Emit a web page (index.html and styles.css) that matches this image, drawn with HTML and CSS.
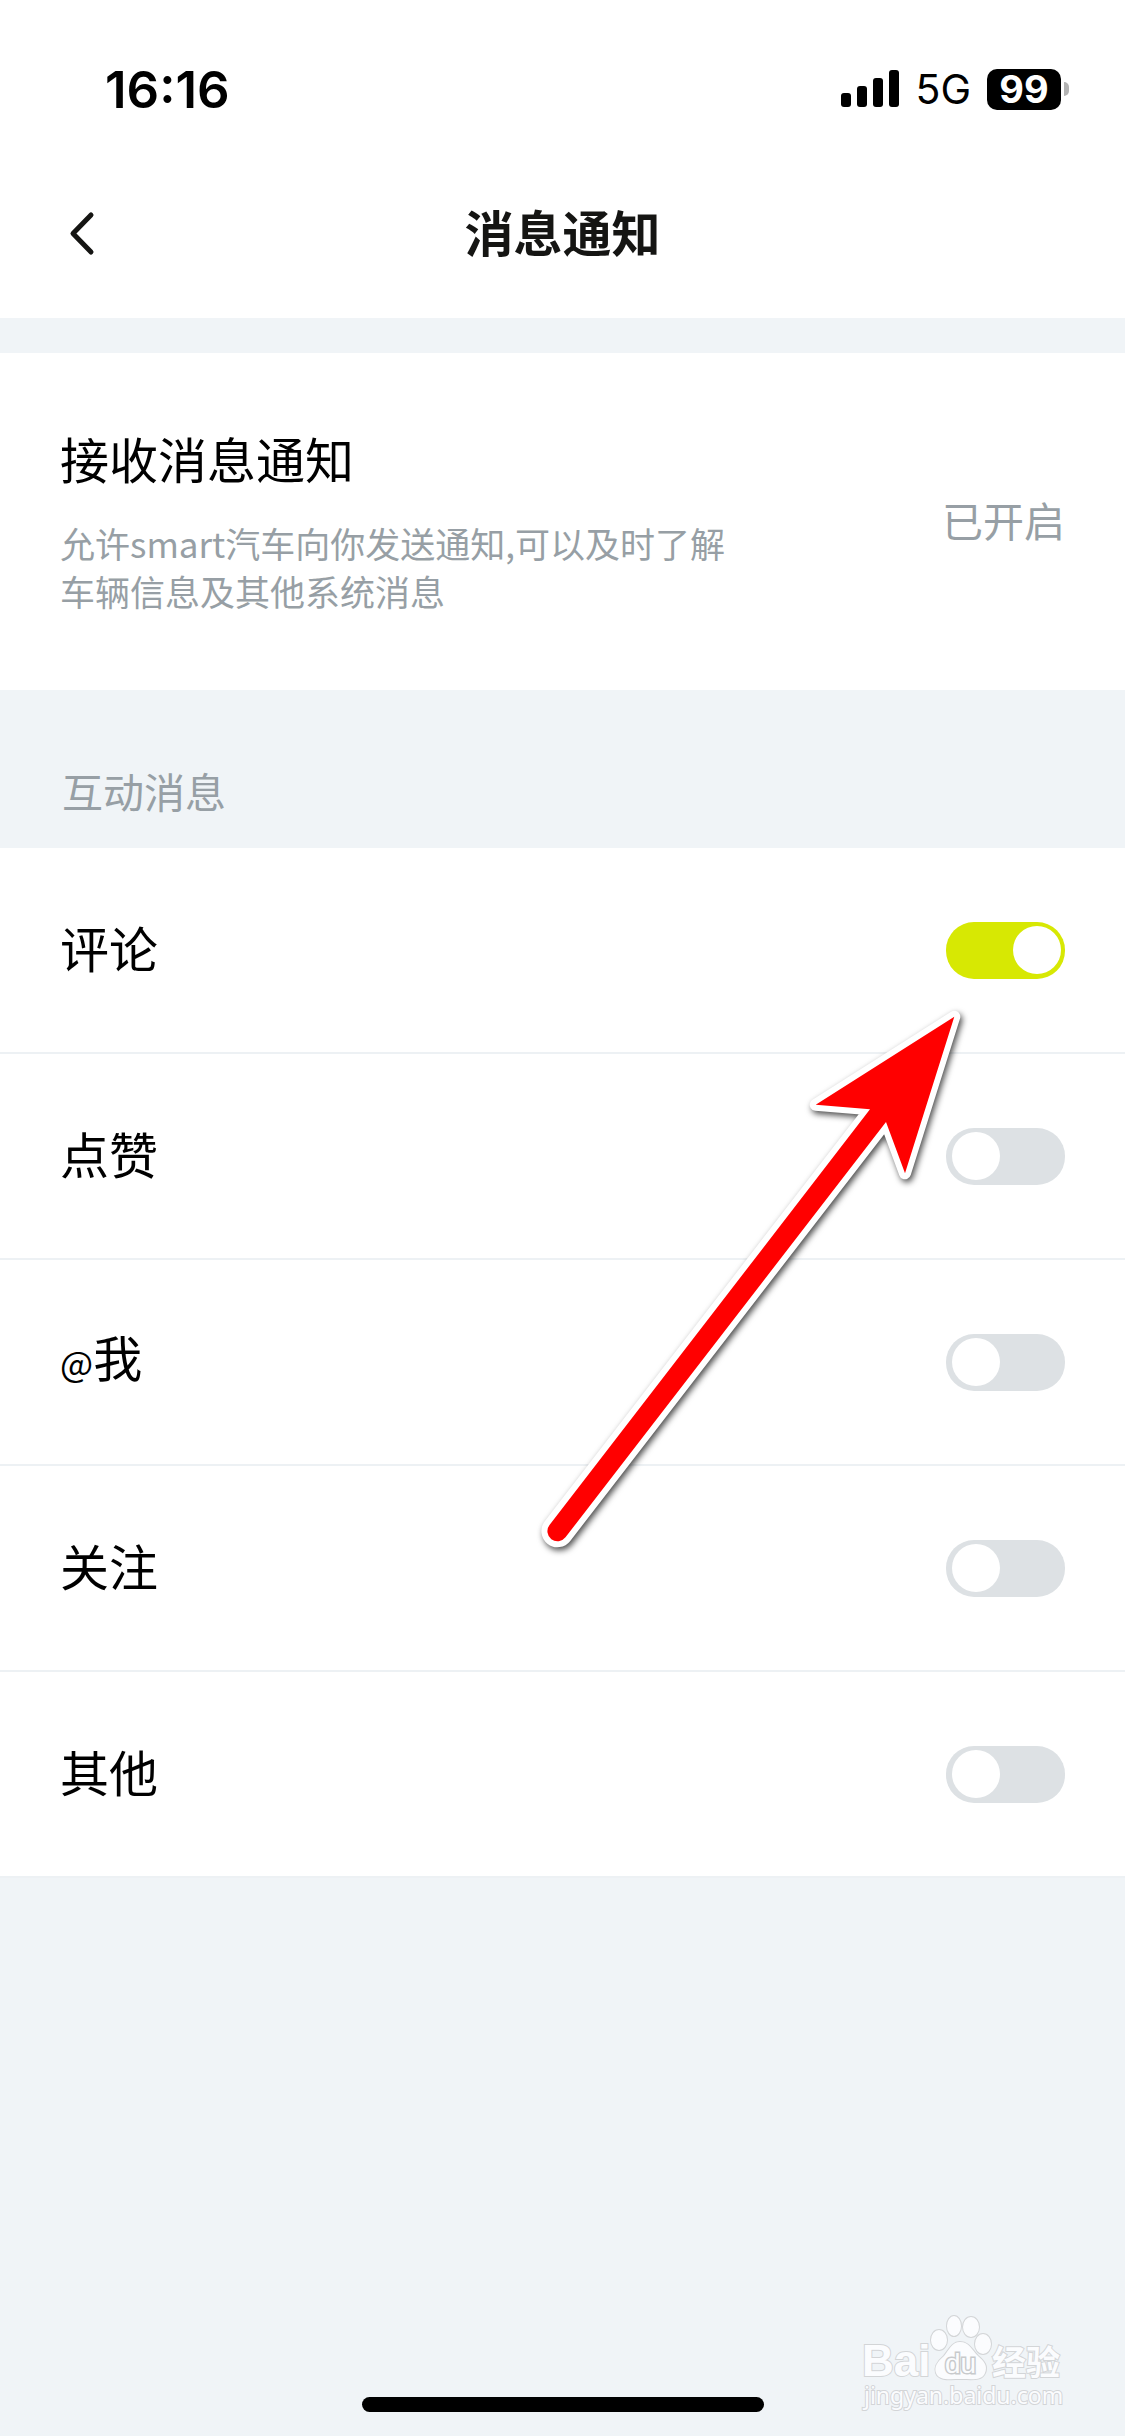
FILE: index.html
```html
<!DOCTYPE html>
<html lang="zh-CN">
<head>
    <meta charset="UTF-8">
    <meta name="viewport" content="width=device-width, initial-scale=1.0">
    <title>消息通知</title>
    <link rel="stylesheet" href="styles.css">
</head>
<body>
    <header class="header">
        <div class="status-bar">
            <span class="time">16:16</span>
            <div class="status-icons">
                <svg class="signal" width="58" height="38" viewBox="0 0 58 38" aria-hidden="true">
                    <rect x="0" y="23" width="10" height="14" rx="3"/>
                    <rect x="16" y="16" width="10" height="21" rx="3"/>
                    <rect x="32" y="8" width="10" height="29" rx="3"/>
                    <rect x="48" y="0" width="10" height="37" rx="3"/>
                </svg>
                <span class="network">5G</span>
                <div class="battery">
                    <span class="battery-level">99</span>
                    <span class="battery-cap"></span>
                </div>
            </div>
        </div>
        <nav class="nav-bar">
            <button class="back" type="button" aria-label="返回">
                <svg width="30" height="48" viewBox="0 0 30 48" aria-hidden="true">
                    <path d="M24 6 L6 24.500 L24 43"/>
                </svg>
            </button>
            <h1 class="title">消息通知</h1>
        </nav>
    </header>

    <main>
        <section class="notice">
            <div class="notice-text">
                <h2>接收消息通知</h2>
                <p>允许smart汽车向你发送通知,可以及时了解车辆信息及其他系统消息</p>
            </div>
            <span class="notice-state">已开启</span>
        </section>

        <h3 class="group-title">互动消息</h3>
        <div class="list">
            <div class="row">
                <label for="comment">评论</label>
                <input class="switch" type="checkbox" id="comment" checked>
            </div>
            <div class="row">
                <label for="like">点赞</label>
                <input class="switch" type="checkbox" id="like">
            </div>
            <div class="row">
                <label for="mention"><span class="at">@</span>我</label>
                <input class="switch" type="checkbox" id="mention">
            </div>
            <div class="row">
                <label for="follow">关注</label>
                <input class="switch" type="checkbox" id="follow">
            </div>
            <div class="row">
                <label for="other">其他</label>
                <input class="switch" type="checkbox" id="other">
            </div>

            <svg class="arrow" width="450" height="580" viewBox="530 990 450 580" aria-hidden="true">
                <path class="arrow-edge" d="M954.300 1016.700 L815.700 1104.700 L870 1109.300 L549.500 1525 A10 10 0 0 0 565.500 1537.300 L886 1122 L905 1173.300 Z"/>
                <path class="arrow-fill" d="M954.300 1016.700 L815.700 1104.700 L870 1109.300 L549.500 1525 A10 10 0 0 0 565.500 1537.300 L886 1122 L905 1173.300 Z"/>
            </svg>
        </div>
    </main>

    <footer class="footer">
        <div class="home-indicator"></div>
        <svg class="watermark" width="210" height="104" viewBox="0 0 210 104">
            <text class="wm-bai" x="2" y="66">Bai</text>
            <ellipse cx="79" cy="30" rx="8" ry="10"/>
            <ellipse cx="94" cy="16" rx="7" ry="10"/>
            <ellipse cx="111" cy="17" rx="8" ry="10"/>
            <ellipse cx="123" cy="34" rx="8" ry="10"/>
            <path d="M100 32 C92 32 89 40 84 46 C77 52 74 57 76 63 C79 71 90 69 101 69 C112 69 122 71 125 63 C128 56 124 51 118 46 C112 40 109 32 100 32 Z"/>
            <text class="wm-du" x="85" y="63">du</text>
            <text class="wm-cn" x="132" y="65">经验</text>
            <text class="wm-url" x="4" y="94">jingyan.baidu.com</text>
        </svg>
    </footer>
</body>
</html>
```
FILE: styles.css
```css
* {
    box-sizing: border-box;
}

body {
    margin: 0;
    min-height: 100vh;
    display: flex;
    flex-direction: column;
    background: #f0f4f7;
    color: #000;
    font-family: "Noto Sans CJK SC", sans-serif;
}

h1, h2, h3, p {
    margin: 0;
    font-weight: 400;
}

/* Status bar and title */
.header {
    background: #fff;
    margin-bottom: 35px;
}

.status-bar {
    display: flex;
    justify-content: space-between;
    align-items: center;
    height: 148px;
    padding: 30px 56px 0 105px;
    font-family: Inter, sans-serif;
}

.time {
    font-size: 51px;
    font-weight: 600;
}

.status-icons {
    display: flex;
    align-items: center;
    gap: 16px;
}

.network {
    font-size: 41px;
}

.battery {
    display: flex;
    align-items: center;
    gap: 3px;
}

.battery-level {
    width: 74px;
    height: 41px;
    border-radius: 10px;
    background: #000;
    color: #fff;
    font-size: 38px;
    font-weight: 700;
    line-height: 41px;
    text-align: center;
}

.battery-cap {
    width: 5px;
    height: 14px;
    border-radius: 0 5px 5px 0;
    background: #b3b3b3;
}

.nav-bar {
    position: relative;
    display: flex;
    justify-content: center;
    align-items: center;
    height: 170px;
}

.back {
    position: absolute;
    left: 67px;
    display: flex;
    padding: 0;
    border: none;
    background: none;
    cursor: pointer;
}

.back path {
    fill: none;
    stroke: #151513;
    stroke-width: 5;
    stroke-linecap: round;
    stroke-linejoin: round;
}

.title {
    padding-bottom: 4px;
    color: #151513;
    font-size: 49px;
    font-weight: 700;
    line-height: 72px;
}

/* System notification card */
.notice {
    display: flex;
    justify-content: space-between;
    align-items: center;
    padding: 69px 60px 75px;
    background: #fff;
}

.notice-text {
    display: flex;
    flex-direction: column;
    gap: 25px;
    max-width: 680px;
}

.notice h2 {
    font-size: 49px;
    line-height: 72px;
}

.notice p {
    color: #979fa5;
    font-size: 35px;
    line-height: 48px;
}

.notice-state {
    color: #979fa5;
    font-size: 41px;
}

/* Switch list */
.group-title {
    padding: 70px 62px 28px;
    color: #979fa5;
    font-size: 41px;
    line-height: 60px;
}

.list {
    position: relative;
    background: #fff;
}

.row {
    display: flex;
    justify-content: space-between;
    align-items: center;
    height: 206px;
    padding: 0 60px;
    border-bottom: 2px solid #edf1f4;
}

.row label {
    padding-bottom: 6px;
    font-size: 49px;
    line-height: 72px;
}

.at {
    font-size: 35px;
}

.switch {
    appearance: none;
    display: flex;
    align-items: center;
    width: 119px;
    height: 57px;
    margin: 0;
    padding: 0 4px 0 6px;
    border-radius: 28px;
    background: #dde1e4;
    cursor: pointer;
}

.switch::before {
    content: "";
    width: 48px;
    height: 48px;
    border-radius: 50%;
    background: #fff;
}

.switch:checked {
    justify-content: flex-end;
    background: #d7e803;
}

/* Arrow pointing at the first switch */
.arrow {
    position: absolute;
    top: 142px;
    right: 145px;
    pointer-events: none;
    filter: drop-shadow(2px 3px 3px rgba(0, 0, 0, 0.7));
}

.arrow-edge {
    fill: #fff;
    stroke: #fff;
    stroke-width: 12;
    stroke-linejoin: round;
}

.arrow-fill {
    fill: #f00;
}

/* Bottom area */
.footer {
    position: relative;
    margin-top: auto;
    padding-bottom: 24px;
}

.home-indicator {
    width: 402px;
    height: 15px;
    margin: 0 auto;
    border-radius: 8px;
    background: #000;
}

.watermark {
    position: absolute;
    right: 55px;
    bottom: 22px;
    fill: #fbfcfe;
    stroke: #d3d5d7;
    stroke-width: 2;
    paint-order: stroke;
}

.wm-bai {
    font: 700 44px "Liberation Sans", sans-serif;
}

.wm-du {
    font: 400 28px "Liberation Sans", sans-serif;
    stroke: #c8cacc;
    stroke-width: 3;
}

.wm-cn {
    font: 700 34px "Noto Sans CJK SC", sans-serif;
}

.wm-url {
    font: 400 23px "Noto Sans", sans-serif;
}
```
